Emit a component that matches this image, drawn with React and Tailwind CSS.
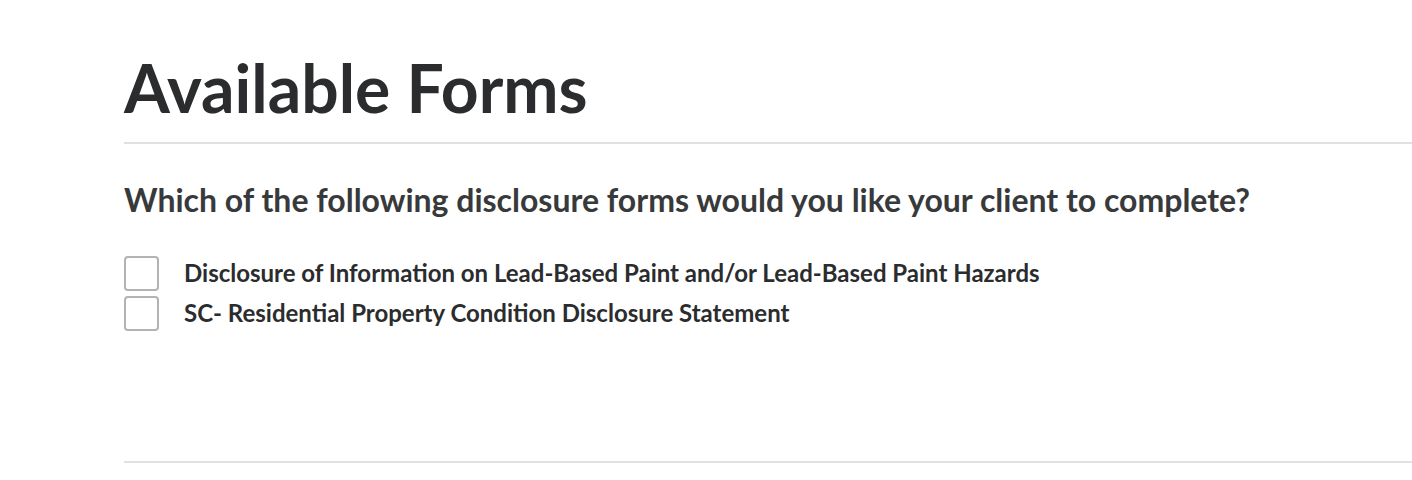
export default function App() {
  const forms = [
    "Disclosure of Information on Lead-Based Paint and/or Lead-Based Paint Hazards",
    "SC- Residential Property Condition Disclosure Statement",
  ];
  return (
    <div className="w-[1412px] h-[480px] bg-white pl-[124px] pt-[50px] text-[#2b2c2e]" style={{ fontFamily: "Lato, 'Noto Sans', sans-serif" }}>
      <h1 className="text-[66px] leading-[76px] font-bold pb-[16px] border-b-2 border-[#dfe2e5]" style={{ fontFamily: "Lato, sans-serif" }}>
        Available Forms
      </h1>
      <h2 className="mt-[36px] text-[32px] leading-[40px] font-bold text-[#38393b]">
        Which of the following disclosure forms would you like your client to complete?
      </h2>
      <div className="mt-[36px] flex flex-col gap-[5px]">
        {forms.map((f) => (
          <label key={f} className="flex items-center gap-[25px]">
            <span className="w-[35px] h-[35px] border-2 border-[#b3b3b5] rounded-[4px] bg-white shrink-0" />
            <span className="text-[24px] leading-[30px] font-bold text-[#2b2c2e] -mt-[2px]">{f}</span>
          </label>
        ))}
      </div>
      <div className="mt-[130px] border-b-2 border-[#dfe2e5]" />
    </div>
  );
}
